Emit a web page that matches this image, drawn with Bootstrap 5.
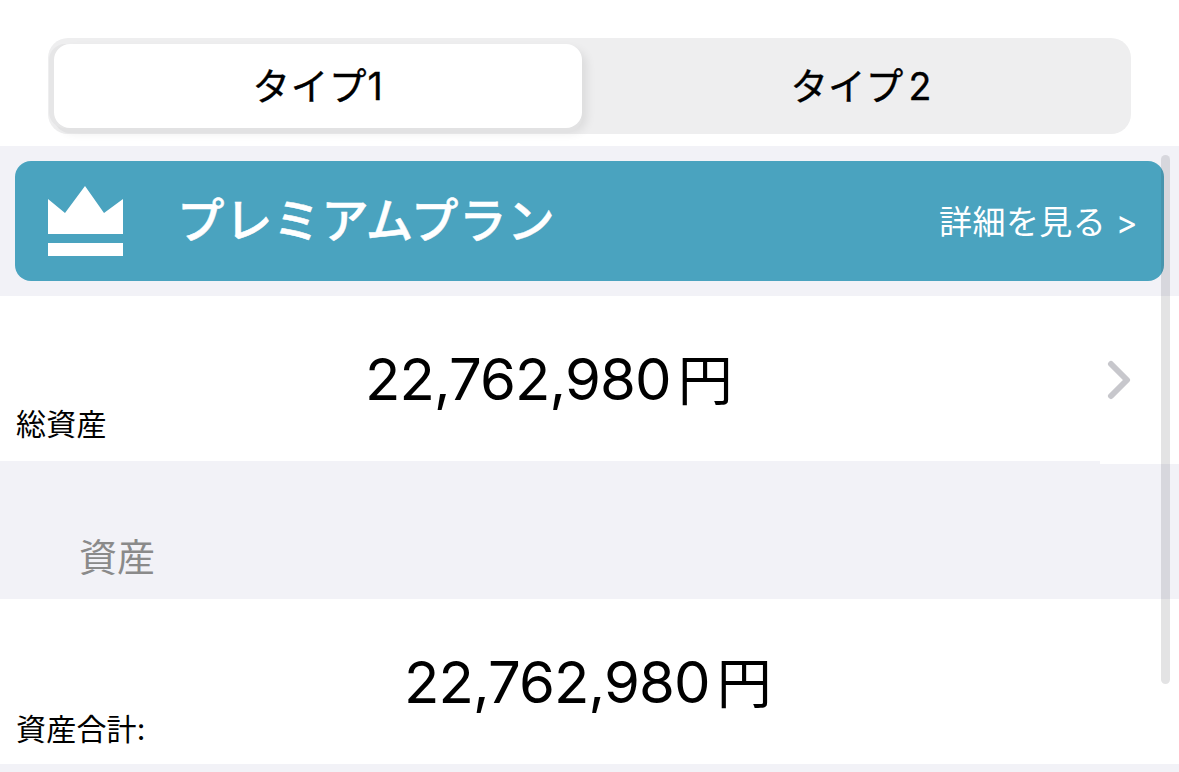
<!DOCTYPE html>
<html lang="ja">
<head>
<meta charset="utf-8">
<title>資産</title>
<link href="https://cdn.jsdelivr.net/npm/bootstrap@5.3.0/dist/css/bootstrap.min.css" rel="stylesheet">
<style>
html,body{height:772px;overflow:hidden}
body{background:#f2f2f7;font-family:Inter,"Noto Sans CJK JP",sans-serif;color:#000;position:relative}
.top-zone{height:146px;background:#fff;padding:38px 48px 0}
.seg-track{height:96px;width:1083px;background:#eeeeef;border-radius:20px;padding:6px 0 6px 6px}
.seg-on,.seg-off{height:84px;font-size:37.5px;font-weight:400;line-height:1;letter-spacing:.8px;-webkit-text-stroke:.35px #000;padding-top:2px}
.seg-on{flex:0 0 528px;background:#fff;border-radius:16px;box-shadow:-5px 0 0 0 #e6e6e7,0 5px 0 0 #e2e2e3,5px 5px 10px rgba(0,0,0,.08)}
.seg-off{flex:1 1 auto;padding-left:9px;letter-spacing:.2px}
.seg-num{margin-left:5px}
.banner-zone{height:150px;padding:15px}
.plan-banner{height:120px;background:#4aa3bf;border-radius:16px;color:#fff;padding:0 26px 0 33px}
.plan-name{font-size:47.5px;font-weight:500;margin-left:53px;line-height:1;letter-spacing:.55px;-webkit-text-stroke:.5px #fff}
.plan-more{font-size:33px;line-height:1;letter-spacing:.4px;padding-top:2px}
.asset-row{background:#fff;height:165px;position:relative}
.asset-value{font-size:58px;line-height:1;font-weight:400;letter-spacing:-.9px}
.asset-value .yen{font-size:55px;margin-left:7px}
.asset-label{font-size:30px;line-height:1;padding-left:16px;letter-spacing:.2px}
.value-line-a{padding-top:54px;height:113px;padding-left:365px}
.value-line-b{padding-top:54px;height:115px;padding-left:404px}
.row-tail{position:absolute;left:1100px;right:0;bottom:-3px;height:3px;background:#fff}
.row-chevron{position:absolute;left:1106px;top:64px}
.group-gap{height:138px;padding-left:79px;padding-top:77px;font-size:38px;line-height:1;color:#8a8a8a}
.scroll-thumb{position:absolute;left:1161px;top:155px;width:9px;height:529px;border-radius:5px;background:rgba(60,60,67,.14)}
</style>
</head>
<body>
<div class="top-zone">
  <div class="seg-track d-flex">
    <div class="seg-on d-flex align-items-center justify-content-center">タイプ1</div>
    <div class="seg-off d-flex align-items-center justify-content-center">タイプ<span class="seg-num">2</span></div>
  </div>
</div>
<div class="banner-zone">
  <div class="plan-banner d-flex align-items-center">
    <svg width="76" height="70" viewBox="0 0 76 70" fill="#fff" aria-hidden="true"><path d="M0 13 17 27 37 0 56 27 75 13V48H0Z"/><rect x="0" y="57" width="75" height="13"/></svg>
    <div class="plan-name">プレミアムプラン</div>
    <div class="plan-more ms-auto">詳細を見る &gt;</div>
  </div>
</div>
<div class="asset-row">
  <div class="asset-value value-line-a">22,762,980<span class="yen">円</span></div>
  <div class="asset-label">総資産</div>
  <svg class="row-chevron" width="26" height="40" viewBox="0 0 26 40" aria-hidden="true"><path d="M5 4 21 20 5 36" fill="none" stroke="#c7c7cc" stroke-width="6" stroke-linecap="round" stroke-linejoin="round"/></svg>
  <div class="row-tail"></div>
</div>
<div class="group-gap">資産</div>
<div class="asset-row">
  <div class="asset-value value-line-b">22,762,980<span class="yen">円</span></div>
  <div class="asset-label">資産合計:</div>
</div>
<div class="scroll-thumb"></div>
<script src="https://cdn.jsdelivr.net/npm/bootstrap@5.3.0/dist/js/bootstrap.bundle.min.js"></script>
</body>
</html>
